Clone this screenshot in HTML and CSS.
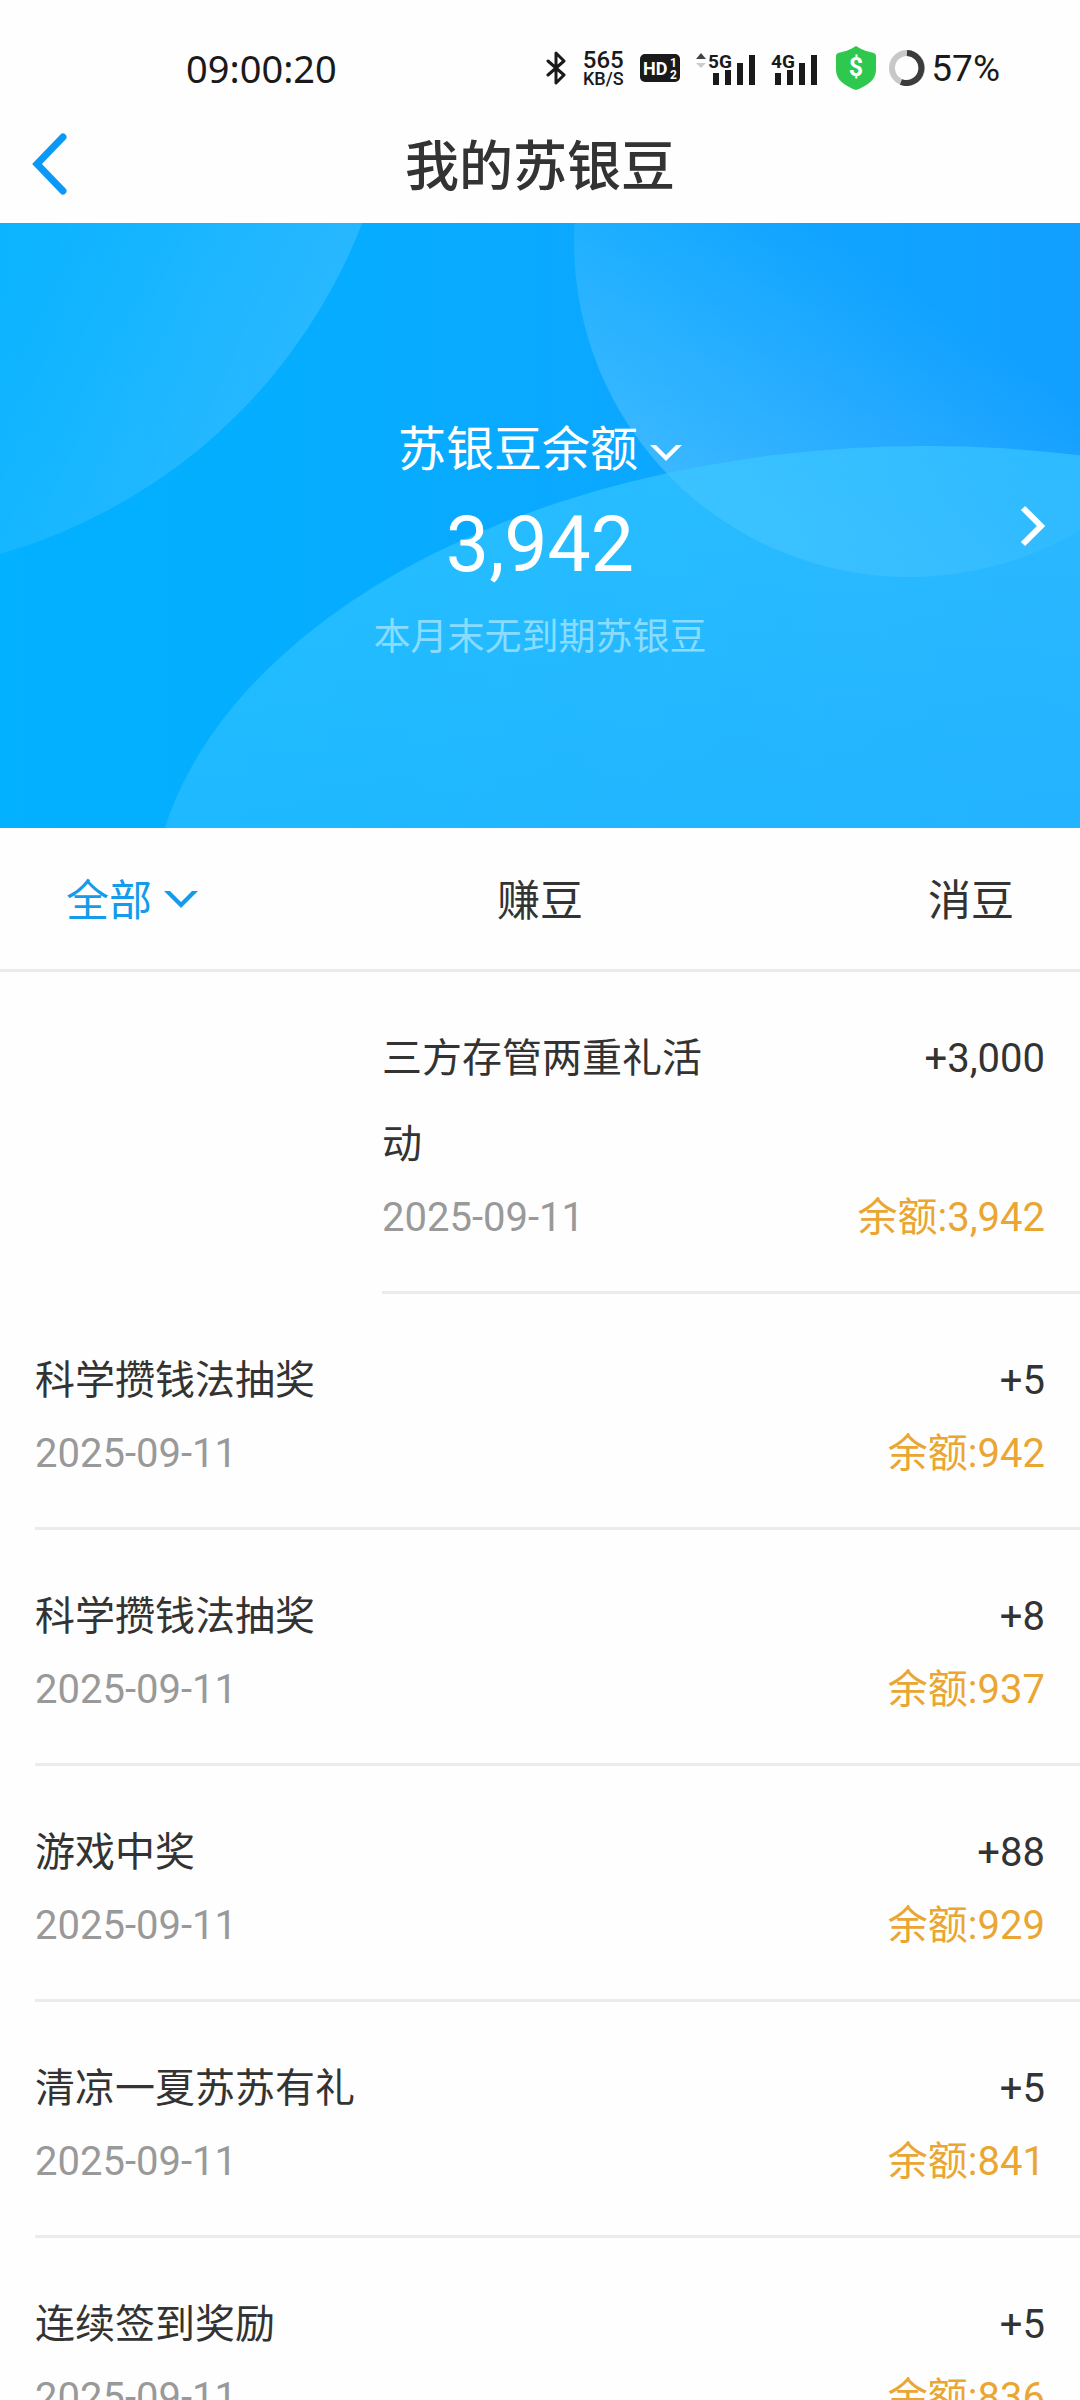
FILE: index.html
```html
<!DOCTYPE html>
<html lang="zh-CN">
<head>
    <meta charset="UTF-8">
    <meta name="viewport" content="width=device-width, initial-scale=1.0">
    <title>我的苏银豆</title>
    <link rel="stylesheet" href="styles.css">
</head>
<body>
    <div class="status-bar">
        <span class="status-time">09:00:20</span>
        <div class="status-icons">
            <svg width="20" height="34" viewBox="0 0 20 34" fill="none" stroke="#1a1a1a" stroke-width="3" stroke-linecap="round" stroke-linejoin="round">
                <path d="M2 10 L18 24 L10 32 V2 L18 10 L2 24"/>
            </svg>
            <div class="speed">
                <span class="speed-value">565</span>
                <span class="speed-unit">KB/S</span>
            </div>
            <svg class="icon-text" width="40" height="28" viewBox="0 0 40 28">
                <rect width="40" height="28" rx="5" fill="#1a1a1a"/>
                <text x="3" y="21" font-size="18" fill="#fff">HD</text>
                <text x="30" y="13" font-size="12" fill="#fff">1</text>
                <text x="30" y="25" font-size="12" fill="#fff">2</text>
            </svg>
            <svg class="icon-text" width="59" height="34" viewBox="0 0 59 34">
                <path d="M0 8 L5 2 L10 8 Z" fill="#444"/>
                <path d="M0 12 L5 17 L10 12 Z" fill="#ccc"/>
                <path d="M17 22h6v12h-6z M29 19h6v15h-6z M41 12h6v22h-6z M53 4h6v30h-6z" fill="#1a1a1a"/>
                <text x="12" y="17" font-size="19" fill="#1a1a1a">5G</text>
            </svg>
            <svg class="icon-text" width="46" height="34" viewBox="0 0 46 34">
                <path d="M4 22h6v12h-6z M16 19h6v15h-6z M28 12h6v22h-6z M40 4h6v30h-6z" fill="#1a1a1a"/>
                <text x="0" y="17" font-size="19" fill="#1a1a1a">4G</text>
            </svg>
            <svg class="icon-text shield" width="40" height="44" viewBox="0 0 40 44">
                <path d="M20 0 C26 4 33 6 38 7 Q40 8 40 10 V24 C40 34 31 40 20 44 C9 40 0 34 0 24 V10 Q0 8 2 7 C7 6 14 4 20 0 Z" fill="#2dc84d"/>
                <text x="20" y="30" font-size="25" text-anchor="middle" fill="#fff">$</text>
            </svg>
            <div class="battery">
                <svg width="36" height="36" viewBox="0 0 36 36" fill="none" stroke-width="6">
                    <circle cx="18" cy="18" r="15" stroke="#c8c8c8"/>
                    <path d="M18 3 A15 15 0 1 1 12 32" stroke="#3c3c3c"/>
                </svg>
                <span>57%</span>
            </div>
        </div>
    </div>

    <header class="header">
        <button type="button" class="back" aria-label="返回">
            <svg width="36" height="66" viewBox="0 0 36 66" fill="none" stroke="#0c98f5" stroke-width="7" stroke-linecap="round">
                <path d="M32 5 L6 32 L32 59" stroke-linejoin="miter"/>
            </svg>
        </button>
        <h1>我的苏银豆</h1>
    </header>

    <section class="balance">
        <svg class="balance-bg" viewBox="0 0 1080 605" preserveAspectRatio="none" aria-hidden="true">
            <defs>
                <linearGradient id="base" x1="0" y1="0" x2="1" y2="0">
                    <stop offset="0" stop-color="#02b1ff"/>
                    <stop offset="0.35" stop-color="#06acff"/>
                    <stop offset="0.75" stop-color="#10a4ff"/>
                    <stop offset="1" stop-color="#129fff"/>
                </linearGradient>
                <linearGradient id="left" gradientUnits="userSpaceOnUse" x1="0" y1="80" x2="300" y2="220">
                    <stop offset="0" stop-color="#fff" stop-opacity="0.04"/>
                    <stop offset="1" stop-color="#fff" stop-opacity="0.15"/>
                </linearGradient>
                <linearGradient id="right" gradientUnits="userSpaceOnUse" x1="680" y1="260" x2="840" y2="20">
                    <stop offset="0" stop-color="#fff" stop-opacity="0.19"/>
                    <stop offset="1" stop-color="#fff" stop-opacity="0"/>
                </linearGradient>
                <linearGradient id="bottom" x1="0" y1="0" x2="0" y2="1">
                    <stop offset="0" stop-color="#3ccbff" stop-opacity="0.6"/>
                    <stop offset="0.4" stop-color="#2fc0ff" stop-opacity="0.6"/>
                </linearGradient>
            </defs>
            <rect width="1080" height="605" fill="url(#base)"/>
            <circle cx="-151" cy="-198" r="550" fill="url(#left)"/>
            <circle cx="909" cy="19" r="335" fill="url(#right)"/>
            <ellipse cx="926" cy="697" rx="776" ry="474" fill="url(#bottom)"/>
        </svg>
        <button type="button" class="balance-label">
            苏银豆余额
            <svg class="chevron" width="32" height="18" viewBox="0 0 32 18">
                <path d="M0 1 H6 L16 11 L26 1 H32 L16 17 Z" fill="#fff"/>
            </svg>
        </button>
        <p class="balance-value">3,942</p>
        <p class="balance-note">本月末无到期苏银豆</p>
        <a href="#" class="balance-more" aria-label="查看详情">
            <svg width="26" height="42" viewBox="0 0 26 42" fill="none" stroke="#fff" stroke-width="6">
                <path d="M3 3 L21 21 L3 39"/>
            </svg>
        </a>
    </section>

    <nav class="tabs">
        <button type="button" class="tab active">
            全部
            <svg class="chevron" width="34" height="20" viewBox="0 0 34 20">
                <path d="M0 2 H6 L17 13 L28 2 H34 L17 19 Z" fill="#149bea"/>
            </svg>
        </button>
        <button type="button" class="tab">赚豆</button>
        <button type="button" class="tab">消豆</button>
    </nav>

    <ul class="records">
        <li class="record indent">
            <span class="name">三方存管两重礼活动</span>
            <span class="amount">+3,000</span>
            <span class="date">2025-09-11</span>
            <span class="rest">余额:3,942</span>
        </li>
        <li class="record">
            <span class="name">科学攒钱法抽奖</span>
            <span class="amount">+5</span>
            <span class="date">2025-09-11</span>
            <span class="rest">余额:942</span>
        </li>
        <li class="record">
            <span class="name">科学攒钱法抽奖</span>
            <span class="amount">+8</span>
            <span class="date">2025-09-11</span>
            <span class="rest">余额:937</span>
        </li>
        <li class="record">
            <span class="name">游戏中奖</span>
            <span class="amount">+88</span>
            <span class="date">2025-09-11</span>
            <span class="rest">余额:929</span>
        </li>
        <li class="record">
            <span class="name">清凉一夏苏苏有礼</span>
            <span class="amount">+5</span>
            <span class="date">2025-09-11</span>
            <span class="rest">余额:841</span>
        </li>
        <li class="record">
            <span class="name">连续签到奖励</span>
            <span class="amount">+5</span>
            <span class="date">2025-09-11</span>
            <span class="rest">余额:836</span>
        </li>
    </ul>
</body>
</html>
```
FILE: styles.css
```css
* {
    box-sizing: border-box;
    margin: 0;
    padding: 0;
}

body {
    font-family: Roboto, "Noto Sans CJK SC", sans-serif;
    background-color: #fefefe;
    color: #333;
    display: flex;
    flex-direction: column;
    height: 100vh;
    overflow: hidden;
}

button {
    font-family: inherit;
    background: none;
    border: none;
    cursor: pointer;
}

svg {
    display: block;
    flex-shrink: 0;
}

/* status bar */
.status-bar {
    display: flex;
    justify-content: space-between;
    align-items: center;
    flex-shrink: 0;
    height: 106px;
    padding: 30px 80px 0 186px;
    color: #1a1a1a;
    font-size: 37px;
}

.status-time {
    font-family: "Noto Sans", sans-serif;
    font-size: 38px;
    line-height: 50px;
}

.status-icons {
    display: flex;
    align-items: center;
    gap: 16px;
}

.icon-text {
    font-weight: 700;
    overflow: visible;
}

.shield {
    margin: 0 -3px 0 3px;
}

.speed {
    display: flex;
    flex-direction: column;
    align-items: center;
    width: 42px;
    padding-top: 2px;
    font-weight: 500;
}

.speed-value {
    font-size: 24px;
    line-height: 20px;
}

.speed-unit {
    font-size: 18px;
    line-height: 18px;
}

.battery {
    display: flex;
    align-items: center;
    gap: 6px;
}

/* page header */
.header {
    display: grid;
    grid-template-columns: 1fr auto 1fr;
    align-items: center;
    flex-shrink: 0;
    height: 117px;
    padding: 0 31px;
}

.back {
    justify-self: start;
}

.header h1 {
    padding-top: 6px;
    font-size: 54px;
    font-weight: 500;
    line-height: 80px;
}

/* balance banner */
.balance {
    position: relative;
    display: flex;
    flex-direction: column;
    align-items: center;
    flex-shrink: 0;
    height: 605px;
    padding-top: 192px;
    overflow: hidden;
    color: #fff;
    background-color: #06acff;
}

.balance-bg {
    position: absolute;
    top: 0;
    left: 0;
    width: 100%;
    height: 100%;
}

.chevron {
    margin-top: 5px;
}

.balance-label {
    position: relative;
    display: flex;
    align-items: center;
    gap: 12px;
    color: #fff;
    font-size: 48px;
    line-height: 70px;
}

.balance-value {
    position: relative;
    font-size: 77px;
    line-height: 120px;
}

.balance-note {
    position: relative;
    color: #8adcff;
    font-size: 37px;
    line-height: 66px;
}

.balance-more {
    position: absolute;
    top: 50%;
    right: 34px;
    transform: translateY(-50%);
}

/* filter tabs */
.tabs {
    display: grid;
    grid-template-columns: 1fr 1fr 1fr;
    flex-shrink: 0;
    height: 144px;
    padding: 0 66px 4px;
    border-bottom: 3px solid #ebebeb;
}

.tab {
    display: flex;
    align-items: center;
    justify-content: center;
    gap: 12px;
    color: #333;
    font-size: 43px;
}

.tab:first-child {
    justify-content: flex-start;
}

.tab:last-child {
    justify-content: flex-end;
}

.tab.active {
    color: #149bea;
}

/* records */
.records {
    flex: 1;
    min-height: 0;
    overflow-y: auto;
    scrollbar-width: none;
    list-style: none;
}

.record {
    display: grid;
    grid-template-columns: 1fr 1fr;
    margin-left: 35px;
    padding: 44px 35px 43px 0;
    border-bottom: 3px solid #ebebeb;
    font-size: 40px;
    line-height: 60px;
}

.record.indent {
    margin-left: 382px;
}

.name,
.amount {
    line-height: 86px;
}

.amount,
.rest {
    text-align: right;
}

.date {
    color: #999;
}

.rest {
    color: #eaa632;
}
```
